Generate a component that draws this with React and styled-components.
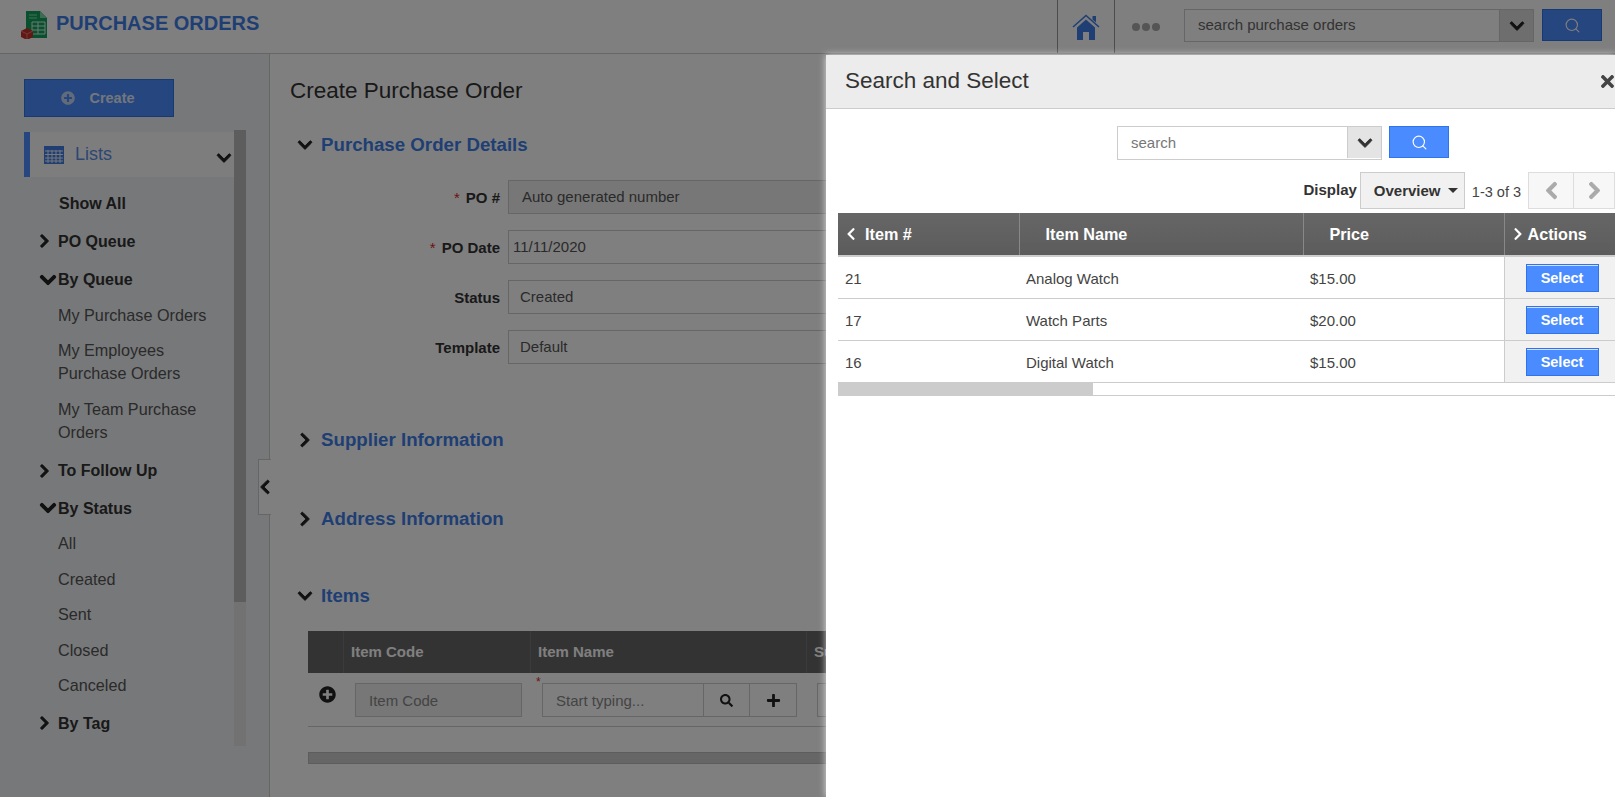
import React from 'react';
import styled, { createGlobalStyle } from 'styled-components';
import { FaChevronDown, FaChevronRight, FaChevronLeft, FaSearch, FaPlus, FaPlusCircle, FaTimes } from 'react-icons/fa';
import { Search } from 'lucide-react';

const GlobalStyle = createGlobalStyle`
	html, body {
		margin: 0;
		padding: 0;
		width: 1615px;
		height: 797px;
		overflow: hidden;
		background: #fff;
		font-family: "Liberation Sans", Arial, sans-serif;
		color: #333;
	}
	* {
		box-sizing: border-box;
	}
`;

const menu = [
	{ label: 'Show All', kind: 'head' },
	{ label: 'PO Queue', kind: 'closed' },
	{ label: 'By Queue', kind: 'open', nudge: 1 },
	{ label: 'My Purchase Orders', kind: 'link', nudge: -1 },
	{ label: 'My Employees Purchase Orders', kind: 'link' },
	{ label: 'My Team Purchase Orders', kind: 'link' },
	{ label: 'To Follow Up', kind: 'closed', nudge: 2 },
	{ label: 'By Status', kind: 'open' },
	{ label: 'All', kind: 'link', nudge: -1 },
	{ label: 'Created', kind: 'link' },
	{ label: 'Sent', kind: 'link' },
	{ label: 'Closed', kind: 'link' },
	{ label: 'Canceled', kind: 'link' },
	{ label: 'By Tag', kind: 'closed', nudge: 1 },
];

const fields = [
	{ label: 'PO #', value: 'Auto generated number', required: true, disabled: true, pad: 13 },
	{ label: 'PO Date', value: '11/11/2020', required: true, pad: 4 },
	{ label: 'Status', value: 'Created', pad: 11 },
	{ label: 'Template', value: 'Default', pad: 11 },
];

const items = [
	{ id: '21', name: 'Analog Watch', price: '$15.00' },
	{ id: '17', name: 'Watch Parts', price: '$20.00' },
	{ id: '16', name: 'Digital Watch', price: '$15.00' },
];

function Logo() {
	return (
		<svg width="28" height="28" viewBox="0 0 28 28">
			<path d="M6 0h14l7 7v20H6z" fill="#12a05c" />
			<path d="M20 0l7 7h-7z" fill="#7fd6a8" />
			<path d="M9 4h8M9 7h8" stroke="#8fe0b5" strokeWidth="1" />
			<path d="M12 11h13v12H12zM12 15h13M12 19h13M18 11v12" stroke="#d8f5e5" strokeWidth="1" fill="none" />
			<path d="M1 20l6-3 6 3v6l-6 3-6-3z" fill="#c4302b" />
			<path d="M1 20l6 3 6-3M7 23v5" stroke="#f08a80" strokeWidth="0.8" fill="none" />
		</svg>
	);
}

function CalendarIcon() {
	return (
		<svg width="20" height="18" viewBox="0 0 20 18">
			<path d="M0 0h20v18H0z" fill="#3f7fe8" />
			<path d="M1 5h18M1 8.500h18M1 12h18M1 15h18M4 4v13M8 4v13M12 4v13M16 4v13" stroke="#eef0f2" strokeWidth="1" />
		</svg>
	);
}

function HomeIcon() {
	return (
		<svg width="28" height="26" viewBox="0 0 28 26">
			<path d="M1 13L14 1.500 27 13" fill="none" stroke="#3f7fe8" strokeWidth="1.600" />
			<path d="M20.500 2h3.500v6.500l-3.500-3z" fill="#3f7fe8" />
			<path d="M5 13.500L14 5.500l9 8V26h-6v-8h-6v8H5z" fill="#3f7fe8" />
		</svg>
	);
}

export default function App() {
	return (
		<>
			<GlobalStyle />
			<Page>
				<Header>
					<Brand>
						<Logo />
						<BrandName>PURCHASE ORDERS</BrandName>
					</Brand>
					<HomeCell>
						<HomeIcon />
					</HomeCell>
					<Dots>
						<i />
						<i />
						<i />
					</Dots>
					<HeaderSearch>
						<SearchText>search purchase orders</SearchText>
						<CaretBox>
							<Down size={16} color="#222" />
						</CaretBox>
					</HeaderSearch>
					<HeaderButton>
						<Search size={17} color="#fff" strokeWidth={1.6} />
					</HeaderButton>
				</Header>
				<Body>
					<Sidebar>
						<CreateButton>
							<FaPlusCircle size={14} color="#c5d6f5" />
							Create
						</CreateButton>
						<SideScroll>
							<SideColumn>
								<ListsRow>
									<CalendarIcon />
									<ListsLabel>Lists</ListsLabel>
									<ListsChevron>
										<Down size={16} color="#222" />
									</ListsChevron>
								</ListsRow>
								{menu.map((m) => (
									<MenuRow key={m.label} $kind={m.kind} $nudge={m.nudge || 0}>
										{m.kind === 'closed' && <Right size={15} color="#222" />}
										{m.kind === 'open' && <Down size={18} color="#222" />}
										<span>{m.label}</span>
									</MenuRow>
								))}
							</SideColumn>
							<Track>
								<Thumb />
							</Track>
						</SideScroll>
						<CollapseTab>
							<Left size={16} color="#222" />
						</CollapseTab>
					</Sidebar>
					<Main>
						<Title>Create Purchase Order</Title>
						<Section $top={27}>
							<Down size={16} color="#222" />
							Purchase Order Details
						</Section>
						<Form>
							{fields.map((f) => (
								<FieldRow key={f.label}>
									<FieldLabel>
										{f.required && <Star>*</Star>}
										{f.label}
									</FieldLabel>
									<FieldBox $disabled={f.disabled} $pad={f.pad}>
										{f.value}
									</FieldBox>
								</FieldRow>
							))}
						</Form>
						<Section $top={63}>
							<Right size={16} color="#222" />
							Supplier Information
						</Section>
						<Section $top={53}>
							<Right size={16} color="#222" />
							Address Information
						</Section>
						<Section $top={51}>
							<Down size={16} color="#222" />
							Items
						</Section>
						<ItemsHead>
							<HeadCell $w={36} />
							<HeadCell $w={187}>Item Code</HeadCell>
							<HeadCell $w={276}>Item Name</HeadCell>
							<HeadCell $w={200}>Supplier</HeadCell>
						</ItemsHead>
						<ItemsRow>
							<AddCell>
								<FaPlusCircle size={17} color="#222" />
							</AddCell>
							<CodeInput>Item Code</CodeInput>
							<TypeGroup>
								<RedMark>*</RedMark>
								<TypeText>Start typing...</TypeText>
								<TypeButton $w={46}>
									<FaSearch size={13} color="#222" />
								</TypeButton>
								<TypeButton $w={47}>
									<FaPlus size={15} color="#222" />
								</TypeButton>
							</TypeGroup>
							<NextInput />
						</ItemsRow>
						<ItemsScroll />
					</Main>
				</Body>
				<Dim />
				<Drawer>
					<DrawerHead>
						Search and Select
						<CloseIcon>
							<FaTimes size={19} color="#444" />
						</CloseIcon>
					</DrawerHead>
					<DrawerSearch>
						<DrawerInput>
							<DrawerInputText>search</DrawerInputText>
							<DrawerCaret>
								<Down size={16} color="#333" />
							</DrawerCaret>
						</DrawerInput>
						<BlueButton>
							<Search size={17} color="#fff" strokeWidth={1.6} />
						</BlueButton>
					</DrawerSearch>
					<PagerRow>
						<DisplayLabel>Display</DisplayLabel>
						<Overview>
							Overview
							<Caret />
						</Overview>
						<Count>1-3 of 3</Count>
						<PagerButton>
							<Left size={19} color="#aaa" />
						</PagerButton>
						<PagerButton>
							<Right size={19} color="#aaa" />
						</PagerButton>
					</PagerRow>
					<ResultTable>
						<thead>
							<tr>
								<Th $w={181}>
									<ThInner $pad={6} $gap={7}>
										<FaChevronLeft size={14} color="#fff" />
										Item #
									</ThInner>
								</Th>
								<Th $w={284}>
									<ThInner $pad={26}>Item Name</ThInner>
								</Th>
								<Th $w={201}>
									<ThInner $pad={26}>Price</ThInner>
								</Th>
								<ThAction $w={111}>
									<ThInner $pad={6} $gap={3}>
										<FaChevronRight size={14} color="#fff" />
										Actions
									</ThInner>
								</ThAction>
							</tr>
						</thead>
						<tbody>
							{items.map((it) => (
								<tr key={it.id}>
									<Td>{it.id}</Td>
									<Td>{it.name}</Td>
									<Td>{it.price}</Td>
									<TdAction>
										<SelectButton>Select</SelectButton>
									</TdAction>
								</tr>
							))}
						</tbody>
					</ResultTable>
					<ScrollRow>
						<ScrollTrack>
							<ScrollThumb />
						</ScrollTrack>
					</ScrollRow>
				</Drawer>
			</Page>
		</>
	);
}

// the reference chevrons are a bit heavier than the stock glyph
const Down = styled(FaChevronDown)`
	stroke: currentColor;
	stroke-width: 30px;
`;

const Right = styled(FaChevronRight)`
	stroke: currentColor;
	stroke-width: 30px;
`;

const Left = styled(FaChevronLeft)`
	stroke: currentColor;
	stroke-width: 30px;
`;

const Page = styled.div`
	position: relative;
	width: 1615px;
	height: 797px;
	overflow: hidden;
	display: flex;
	flex-direction: column;
`;

const Header = styled.header`
	height: 54px;
	flex: none;
	display: flex;
	align-items: flex-start;
	border-bottom: 1px solid #ccc;
	padding-right: 13px;
`;

const Brand = styled.div`
	display: flex;
	align-items: center;
	gap: 8px;
	padding: 11px 0 0 20px;
	width: 1057px;
`;

const BrandName = styled.div`
	font-size: 20px;
	font-weight: bold;
	color: #3f7fe8;
	margin-top: -3px;
`;

const HomeCell = styled.div`
	width: 58px;
	height: 53px;
	border-left: 1px solid #999;
	border-right: 1px solid #999;
	display: flex;
	align-items: center;
	justify-content: center;
`;

const Dots = styled.div`
	width: 69px;
	height: 53px;
	display: flex;
	align-items: center;
	justify-content: center;
	gap: 2px;
	padding-right: 8px;

	i {
		width: 8px;
		height: 8px;
		border-radius: 50%;
		background: #aaa;
	}
`;

const HeaderSearch = styled.div`
	width: 350px;
	height: 33px;
	margin: 9px 8px 0 0;
	border: 1px solid #ccc;
	display: flex;
	align-items: stretch;
`;

const SearchText = styled.div`
	flex: 1;
	font-size: 15px;
	color: #666;
	line-height: 30px;
	padding-left: 13px;
`;

const CaretBox = styled.div`
	width: 34px;
	background: #ddd;
	border-left: 1px solid #ccc;
	display: flex;
	align-items: center;
	justify-content: center;
`;

const BlueButton = styled.div`
	width: 60px;
	height: 32px;
	background: #4a8cff;
	border: 1px solid #2f74ea;
	display: flex;
	align-items: center;
	justify-content: center;
	flex: none;
`;

const HeaderButton = styled(BlueButton)`
	margin-top: 9px;
`;

const Body = styled.div`
	flex: 1;
	display: flex;
	min-height: 0;
`;

const Sidebar = styled.aside`
	position: relative;
	width: 270px;
	flex: none;
	background: #eef0f2;
	border-right: 1px solid #ccc;
	padding: 25px 0 0 24px;
`;

const CreateButton = styled.div`
	width: 150px;
	height: 38px;
	background: #4a8cff;
	border: 1px solid #2f74ea;
	display: flex;
	align-items: center;
	justify-content: center;
	gap: 14px;
	color: #e4ecfb;
	font-size: 14.500px;
	font-weight: bold;
	padding-right: 2px;
`;

const SideScroll = styled.div`
	display: flex;
	margin-top: 13px;
	height: 616px;
`;

const SideColumn = styled.div`
	width: 210px;
	padding-top: 2px;
`;

const ListsRow = styled.div`
	height: 45px;
	background: #fbfbfb;
	border-left: 6px solid #4a8cff;
	display: flex;
	align-items: center;
	padding: 0 2px 0 14px;
	margin-bottom: 8px;
`;

const ListsLabel = styled.div`
	flex: 1;
	font-size: 18px;
	color: #5b8fe8;
	padding-left: 11px;
`;

const ListsChevron = styled.div`
	display: flex;
	margin-top: 6px;
`;

const MenuRow = styled.div`
	position: relative;
	display: flex;
	align-items: center;
	margin-top: ${(p) => p.$nudge}px;
	padding-left: ${(p) => (p.$kind === 'head' ? 35 : 34)}px;
	font-size: ${(p) => (p.$kind === 'link' ? 16.200 : 16)}px;
	line-height: 23px;
	font-weight: ${(p) => (p.$kind === 'link' ? 'normal' : 'bold')};
	color: ${(p) => (p.$kind === 'link' ? '#555' : '#333')};
	min-height: ${(p) => (p.$kind === 'link' ? 35.500 : 37.500)}px;
	padding-top: ${(p) => (p.$kind === 'link' ? 6.250 : 0)}px;
	padding-bottom: ${(p) => (p.$kind === 'link' ? 6.250 : 0)}px;

	svg {
		position: absolute;
		left: ${(p) => (p.$kind === 'open' ? 14.500 : 13)}px;
		top: 50%;
		transform: translateY(-50%);
	}
`;

const Track = styled.div`
	width: 12px;
	background: #e4e5e6;
	height: 616px;
`;

const Thumb = styled.div`
	width: 12px;
	height: 472px;
	background: #bbb;
`;

const CollapseTab = styled.div`
	position: absolute;
	left: 258px;
	top: 405px;
	width: 13px;
	height: 56px;
	background: #fff;
	border: 1px solid #ccc;
	border-right: none;
	display: flex;
	align-items: center;
	justify-content: center;
`;

const Main = styled.main`
	flex: 1;
	padding: 23px 0 0 20px;
	min-width: 0;
`;

const Title = styled.h1`
	margin: 0;
	font-size: 22.500px;
	font-weight: normal;
	line-height: 28px;
	color: #333;
`;

const Section = styled.div`
	display: flex;
	align-items: center;
	gap: 8px;
	margin-top: ${(p) => p.$top}px;
	padding-left: 7px;
	height: 26px;
	font-size: 18.700px;
	font-weight: bold;
	color: #3f7fe8;
`;

const Form = styled.div`
	margin: 22px 0 0 0;
	display: flex;
	flex-direction: column;
	gap: 16px;
`;

const FieldRow = styled.div`
	display: flex;
	align-items: center;
	gap: 8px;
`;

const FieldLabel = styled.div`
	width: 210px;
	text-align: right;
	font-size: 15px;
	font-weight: bold;
	color: #333;
`;

const Star = styled.span`
	color: #d22;
	font-weight: normal;
	margin-right: 6px;
`;

const FieldBox = styled.div`
	width: 500px;
	height: 34px;
	border: 1px solid #ccc;
	background: ${(p) => (p.$disabled ? '#eee' : '#fff')};
	font-size: 15px;
	line-height: 32px;
	color: #555;
	padding-left: ${(p) => p.$pad}px;
`;

const ItemsHead = styled.div`
	display: flex;
	height: 42px;
	margin: 22px 0 0 18px;
	width: 600px;
	background: #666;
`;

const HeadCell = styled.div`
	width: ${(p) => p.$w}px;
	flex: none;
	border-right: 1px solid #777;
	padding-left: 7px;
	line-height: 42px;
	font-size: 15px;
	font-weight: bold;
	color: #fff;
`;

const ItemsRow = styled.div`
	display: flex;
	align-items: flex-start;
	height: 54px;
	margin-left: 18px;
	width: 600px;
	padding-top: 10px;
	border-bottom: 1px solid #ccc;
`;

const AddCell = styled.div`
	width: 47px;
	padding: 3px 0 0 11px;
`;

const CodeInput = styled.div`
	width: 167px;
	height: 34px;
	border: 1px solid #ccc;
	background: #eee;
	font-size: 15px;
	line-height: 33px;
	color: #888;
	padding-left: 13px;
`;

const TypeGroup = styled.div`
	position: relative;
	width: 255px;
	height: 34px;
	margin-left: 20px;
	border: 1px solid #ccc;
	display: flex;
`;

const RedMark = styled.span`
	position: absolute;
	left: -7px;
	top: -9px;
	font-size: 12px;
	color: #d22;
`;

const TypeText = styled.div`
	flex: 1;
	font-size: 15px;
	line-height: 33px;
	color: #888;
	padding-left: 13px;
`;

const TypeButton = styled.div`
	width: ${(p) => p.$w}px;
	border-left: 1px solid #ccc;
	display: flex;
	align-items: center;
	justify-content: center;
`;

const NextInput = styled.div`
	width: 60px;
	height: 34px;
	margin-left: 20px;
	border: 1px solid #ccc;
`;

const ItemsScroll = styled.div`
	margin: 25px 0 0 18px;
	width: 600px;
	height: 12px;
	background: #ccc;
	border: 1px solid #bbb;
`;

const Dim = styled.div`
	position: absolute;
	inset: 0;
	background: rgba(0, 0, 0, 0.5);
`;

const Drawer = styled.div`
	position: absolute;
	left: 826px;
	top: 55px;
	width: 789px;
	height: 742px;
	background: #fff;
	box-shadow: 0 0 7px rgba(255, 255, 255, 0.75);
	display: flex;
	flex-direction: column;
`;

const DrawerHead = styled.div`
	height: 54px;
	flex: none;
	background: #ececec;
	border-bottom: 1px solid #ccc;
	font-size: 22.500px;
	color: #333;
	padding-left: 19px;
	line-height: 52px;
	position: relative;
`;

const CloseIcon = styled.div`
	position: absolute;
	right: -2px;
	top: 17px;
	display: flex;
`;

const DrawerSearch = styled.div`
	display: flex;
	gap: 7px;
	padding: 17px 0 0 291px;
`;

const DrawerInput = styled.div`
	width: 265px;
	height: 34px;
	border: 1px solid #ccc;
	display: flex;
`;

const DrawerInputText = styled.div`
	flex: 1;
	font-size: 15px;
	color: #777;
	line-height: 32px;
	padding-left: 13px;
`;

const DrawerCaret = styled.div`
	width: 34px;
	height: 31px;
	background: #e4e4e4;
	border-left: 1px solid #ccc;
	display: flex;
	align-items: center;
	justify-content: center;
`;

const PagerRow = styled.div`
	display: flex;
	align-items: flex-start;
	justify-content: flex-end;
	margin-top: 12px;
	height: 37px;
`;

const DisplayLabel = styled.div`
	font-size: 15px;
	font-weight: bold;
	color: #333;
	line-height: 36px;
	margin-right: 3px;
`;

const Overview = styled.div`
	width: 105px;
	height: 37px;
	background: #f1f1f1;
	border: 1px solid #ccc;
	display: flex;
	align-items: center;
	gap: 7px;
	padding-left: 13px;
	font-size: 15px;
	font-weight: bold;
	color: #333;
`;

const Caret = styled.i`
	width: 0;
	height: 0;
	border: 5px solid transparent;
	border-top-color: #333;
	border-bottom: none;
`;

const Count = styled.div`
	font-size: 14.500px;
	color: #444;
	line-height: 41px;
	margin: 0 7px;
`;

const PagerButton = styled.div`
	width: 46px;
	height: 37px;
	background: #f7f7f7;
	border: 1px solid #ddd;
	display: flex;
	align-items: center;
	justify-content: center;

	& + & {
		width: 41px;
		border-left: none;
	}
`;

const ResultTable = styled.table`
	margin: 4px 0 0 12px;
	width: 777px;
	table-layout: fixed;
	border-collapse: collapse;
	border-spacing: 0;
`;

const Th = styled.th`
	width: ${(p) => p.$w}px;
	height: 43px;
	padding: 0;
	text-align: left;
	background: linear-gradient(#666, #5c5c5c);
	border-bottom: 2px solid #ccc;
	border-right: 1px solid #888;
	font-size: 16.200px;
	font-weight: bold;
	color: #fff;
`;

const ThAction = styled(Th)`
	border-right: none;
	border-left: 1px solid #999;
`;

const ThInner = styled.div`
	display: flex;
	align-items: center;
	gap: ${(p) => p.$gap || 0}px;
	padding-left: ${(p) => p.$pad}px;
`;

const Td = styled.td`
	height: 42px;
	padding: 3px 0 0 7px;
	font-size: 15px;
	color: #444;
	border-bottom: 1px solid #ccc;
`;

const TdAction = styled.td`
	height: 42px;
	padding: 2px 0 0 21px;
	background: #f1f1f1;
	border-left: 1px solid #ccc;
	border-bottom: 1px solid #ccc;
`;

const SelectButton = styled.div`
	width: 73px;
	height: 28px;
	background: #4a8cff;
	border: 1px solid #2f74ea;
	box-shadow: inset 0 1px 0 #cfe0ff;
	color: #fff;
	font-size: 14.500px;
	font-weight: bold;
	text-align: center;
	line-height: 26px;
`;

const ScrollRow = styled.div`
	margin-left: 12px;
	height: 13px;
	border-bottom: 1px solid #ccc;
`;

const ScrollTrack = styled.div`
	width: 663px;
	height: 12px;
`;

const ScrollThumb = styled.div`
	width: 255px;
	height: 12px;
	background: #ccc;
`;
